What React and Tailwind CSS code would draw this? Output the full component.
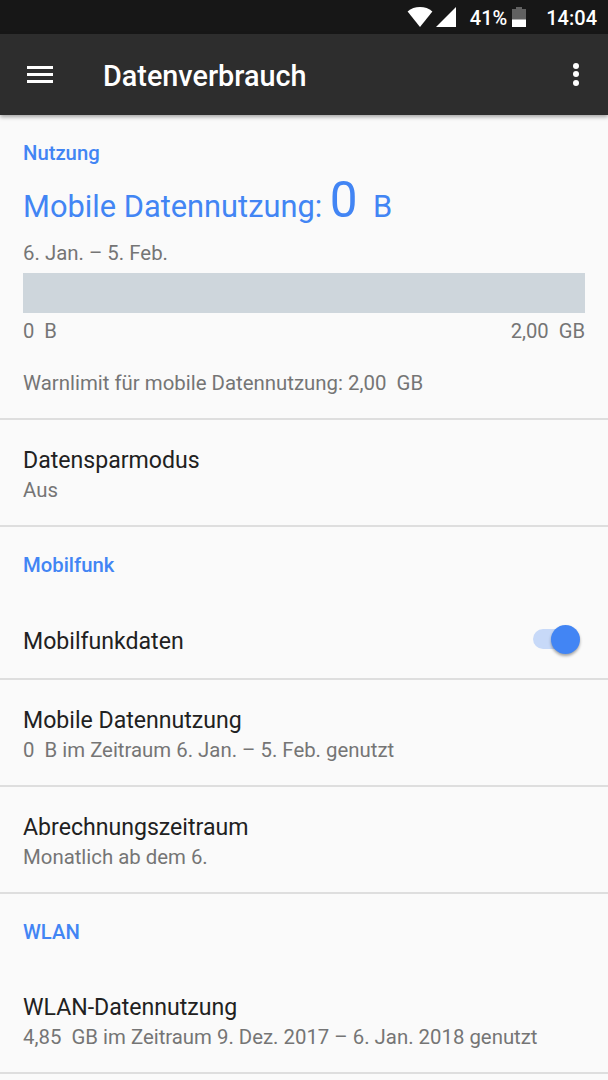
import React from 'react';

const StatusBar = () => (
    <div className="h-[34px] bg-[#171717] flex items-center justify-end pr-[11px] text-white text-[20px] font-medium leading-[34px]">
        <svg width="26" height="20" viewBox="0 0 26 20" fill="currentColor" className="mr-[3px]">
            <path d="M13 20 0.6 4.4C4 1.5 8.3 0 13 0s9 1.5 12.4 4.4z" />
        </svg>
        <svg width="21" height="20" viewBox="0 0 21 20" fill="currentColor" className="mr-[13px]">
            <path d="M0 20H20V0z" />
        </svg>
        <span className="mt-[2px]">41%</span>
        <svg width="14" height="20" viewBox="0 0 14 20" className="ml-[5px] mr-[20px]">
            <path d="M0 2h4V0h6v2h4v11H0z" fill="#616161" />
            <path d="M0 12.5h14V20H0z" fill="#fff" />
        </svg>
        <span className="mt-[2px]">14:04</span>
    </div>
);

const AppBar = () => (
    <header className="relative h-[80.5px] bg-[#2d2d2d] flex items-center text-white shadow-[0_2px_4px_rgba(0,0,0,0.35)]">
        <button className="ml-[27px] flex flex-col gap-[4px]" aria-label="Menü">
            <span className="block w-[26px] h-[3px] bg-white" />
            <span className="block w-[26px] h-[3px] bg-white" />
            <span className="block w-[26px] h-[3px] bg-white" />
        </button>
        <h1 className="ml-[50px] mt-[3.5px] flex-1 text-[28.8px] font-medium leading-[32px]">Datenverbrauch</h1>
        <button className="mr-[29px] flex flex-col gap-[2.6px]" aria-label="Optionen">
            <span className="block w-[6px] h-[6px] rounded-full bg-white" />
            <span className="block w-[6px] h-[6px] rounded-full bg-white" />
            <span className="block w-[6px] h-[6px] rounded-full bg-white" />
        </button>
    </header>
);

const Category = ({ children }) => (
    <h2 className="text-[20.3px] font-medium leading-[24px] text-[#4285f4]">{children}</h2>
);

const Row = ({ title, summary }) => (
    <div className="h-[107px] px-[23px] pt-[27px] border-b-2 border-[#dedede]">
        <h3 className="text-[23.1px] leading-[28px] text-[#212121]">{title}</h3>
        <p className="mt-[3px] text-[20.38px] leading-[24px] text-[#757575] whitespace-pre">{summary}</p>
    </div>
);

const Usage = () => (
    <section className="h-[305.5px] px-[23px] pt-[26.5px] border-b-2 border-[#dedede] text-[20.4px] leading-[24px] text-[#757575] whitespace-pre">
        <Category>Nutzung</Category>
        <p className="mt-[10px] h-[52px] text-[30.8px] leading-[52px] text-[#4285f4]">
            Mobile Datennutzung: <span className="text-[49.5px] leading-[50px]">0</span>{'  '}B
        </p>
        <p className="mt-[14px]">6. Jan. – 5. Feb.</p>
        <div className="mt-[7.5px] h-[40px] bg-[#ced6dc]" />
        <div className="mt-[6px] flex justify-between text-[20.2px]">
            <span>{'0  B'}</span>
            <span>{'2,00  GB'}</span>
        </div>
        <p className="mt-[28px]">{'Warnlimit für mobile Datennutzung: 2,00  GB'}</p>
    </section>
);

const Switch = () => (
    <div className="relative w-[47px] h-[30px] flex items-center">
        <span className="w-[44px] h-[20px] rounded-full bg-[#c7d9f8]" />
        <span className="absolute right-0 top-[0.5px] w-[29px] h-[29px] rounded-full bg-[#4285f4] shadow-[0_2px_3px_rgba(0,0,0,0.35)]" />
    </div>
);

const App = () => {
    const rows = [
        { title: 'Mobile Datennutzung', summary: '0  B im Zeitraum 6. Jan. – 5. Feb. genutzt' },
        { title: 'Abrechnungszeitraum', summary: 'Monatlich ab dem 6.' },
    ];

    return (
        <div className="h-[1080px] w-[608px] overflow-hidden bg-[#fafafa] font-['Roboto',sans-serif]">
            <StatusBar />
            <AppBar />
            <Usage />
            <Row title="Datensparmodus" summary="Aus" />

            <section>
                <div className="px-[23px] pt-[26px] h-[73px]">
                    <Category>Mobilfunk</Category>
                </div>
                <div className="h-[80px] pl-[23px] pr-[28px] flex items-center justify-between border-b-2 border-[#dedede]">
                    <h3 className="mt-[5px] text-[23.1px] leading-[28px] text-[#212121]">Mobilfunkdaten</h3>
                    <Switch />
                </div>
                {rows.map((row) => (
                    <Row key={row.title} title={row.title} summary={row.summary} />
                ))}
            </section>

            <section>
                <div className="px-[23px] pt-[26px] h-[73px]">
                    <Category>WLAN</Category>
                </div>
                <Row title="WLAN-Datennutzung" summary="4,85  GB im Zeitraum 9. Dez. 2017 – 6. Jan. 2018 genutzt" />
            </section>
        </div>
    );
};

export default App;
